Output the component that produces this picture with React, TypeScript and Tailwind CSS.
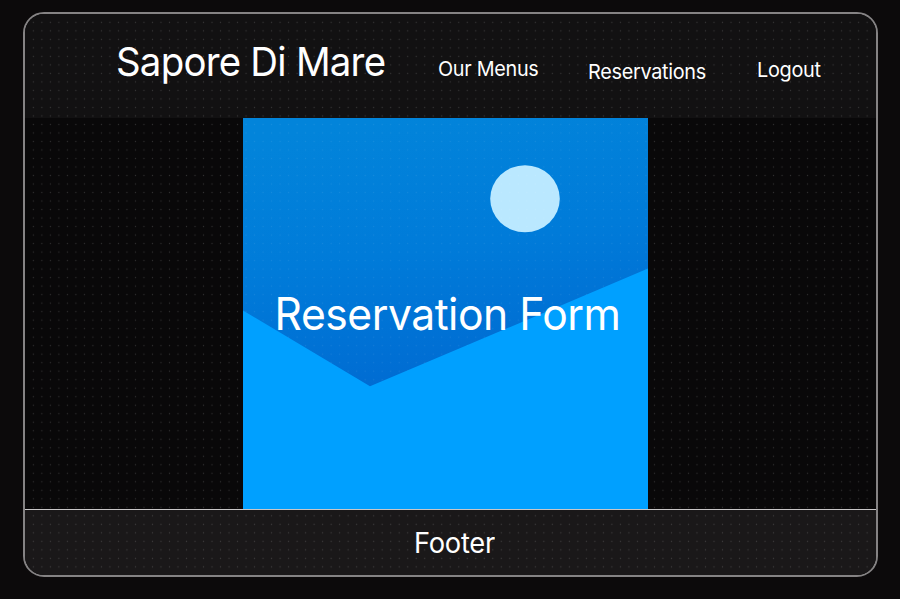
const links = [
  { label: "Our Menus", style: "ml-[52px] mt-[7px] scale-x-[0.965]" },
  { label: "Reservations", style: "ml-[46px] mt-[13px] scale-x-[0.968]" },
  { label: "Logout", style: "ml-[46.5px] mt-[9px] scale-x-[0.97]" },
];

function DotGrid() {
  return (
    <svg className="pointer-events-none absolute inset-0 h-full w-full" aria-hidden="true">
      <defs>
        <pattern id="dots" x="4.1" y="4.1" width="8.508" height="8.508" patternUnits="userSpaceOnUse">
          <circle cx="4.25" cy="4.25" r="0.65" fill="#ffffff" fillOpacity="0.16" />
        </pattern>
      </defs>
      <path d="M4 4H847V559H4ZM218 104V495H623V104Z" fillRule="evenodd" fill="url(#dots)" />
      <path d="M218 104H623V255L345 373L218 297Z" fill="url(#dots)" fillOpacity="0.5" />
    </svg>
  );
}

function Scene() {
  return (
    <svg className="col-start-1 row-start-1 h-full w-full" viewBox="0 0 405 392" preserveAspectRatio="none" aria-hidden="true">
      <defs>
        <linearGradient id="sky" gradientUnits="userSpaceOnUse" x1="150" y1="0" x2="190" y2="270">
          <stop offset="0" stopColor="#0284da" />
          <stop offset="0.5" stopColor="#007bd9" />
          <stop offset="1" stopColor="#006bd2" />
        </linearGradient>
      </defs>
      <rect width="405" height="392" fill="url(#sky)" />
      <ellipse cx="282" cy="81" rx="34.8" ry="33.6" fill="#bae8ff" />
      <path d="M0 193L127 269L405 151V392H0Z" fill="#00a0ff" />
    </svg>
  );
}

export default function App() {
  return (
    <div className="h-[599px] w-[900px] overflow-hidden bg-[#0c0a0b] pl-[23px] pt-3 font-['Inter',sans-serif] text-white">
      <div className="relative flex h-[565px] w-[855px] flex-col overflow-hidden rounded-[21px] border-2 border-[#858384] bg-[#090809]">
        <header className="flex h-[104px] shrink-0 items-center bg-[#121112] pl-[91px] whitespace-nowrap">
          <h1 className="-mt-[9px] w-[270px] origin-left scale-x-[0.96] text-[40px] leading-none tracking-[-0.8px]">Sapore Di Mare</h1>
          <nav className="flex items-center text-[20.5px] leading-none tracking-[-0.3px]">
            {links.map((l) => (
              <a key={l.label} className={`origin-left ${l.style}`}>{l.label}</a>
            ))}
          </nav>
        </header>
        <main className="flex min-h-0 flex-1 pl-[218px]">
          <section className="grid h-full w-[405px] grid-cols-1 grid-rows-1">
            <Scene />
            <h2 className="col-start-1 row-start-1 mt-[2px] ml-[4px] scale-x-[0.958] self-center justify-self-center whitespace-nowrap text-[44.5px] leading-none tracking-[-0.5px]">
              Reservation Form
            </h2>
          </section>
        </main>
        <footer className="flex h-[66px] shrink-0 items-center justify-center border-t border-[#c8c6c7] bg-[#1a1819] pt-px pl-[8px]">
          <span className="scale-x-[0.975] text-[28px] leading-none tracking-[-0.3px]">Footer</span>
        </footer>
        <DotGrid />
      </div>
    </div>
  );
}
